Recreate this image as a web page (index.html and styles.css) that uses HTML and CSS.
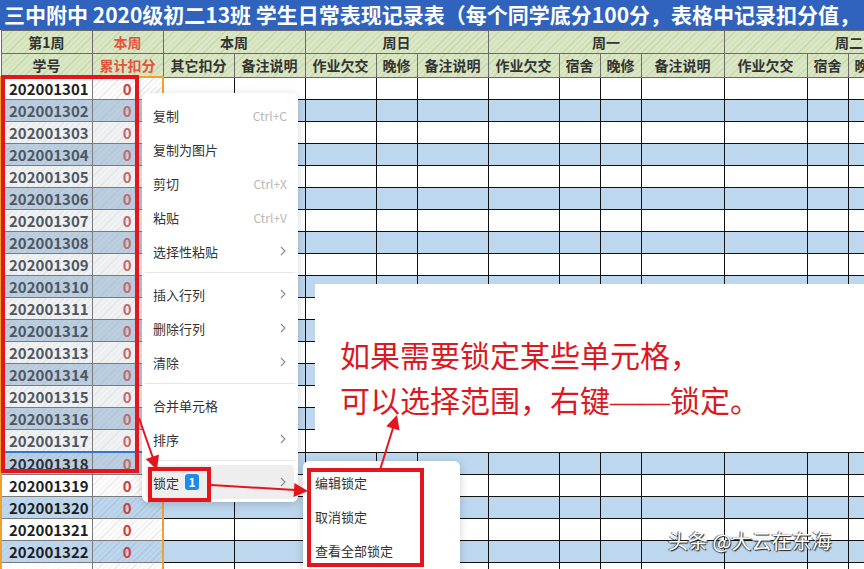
FILE: index.html
```html
<!DOCTYPE html>
<html lang="zh-CN">
<head>
    <meta charset="UTF-8">
    <title>学生日常表现记录表</title>
    <link rel="stylesheet" href="styles.css">
</head>
<body>
    <div class="sheet">
        <div class="title">三中附中 2020级初二13班 学生日常表现记录表（每个同学底分100分，表格中记录扣分值，</div>

        <table class="grid">
            <colgroup>
                <col class="c-id"><col class="c-mid"><col class="c-mid"><col class="c-mid">
                <col class="c-mid"><col class="c-narrow"><col class="c-mid">
                <col class="c-mid"><col class="c-narrow"><col class="c-narrow"><col class="c-wide">
                <col class="c-wide"><col class="c-narrow"><col class="c-narrow"><col class="c-last">
            </colgroup>
            <thead>
                <tr>
                    <th>第1周</th>
                    <th class="red">本周</th>
                    <th colspan="2">本周</th>
                    <th colspan="3">周日</th>
                    <th colspan="4">周一</th>
                    <th colspan="4">周二</th>
                </tr>
                <tr>
                    <th>学号</th>
                    <th class="red">累计扣分</th>
                    <th>其它扣分</th>
                    <th>备注说明</th>
                    <th>作业欠交</th>
                    <th>晚修</th>
                    <th>备注说明</th>
                    <th>作业欠交</th>
                    <th>宿舍</th>
                    <th>晚修</th>
                    <th>备注说明</th>
                    <th>作业欠交</th>
                    <th>宿舍</th>
                    <th>晚修</th>
                    <th>备注说明</th>
                </tr>
            </thead>
            <tbody id="rows"></tbody>
        </table>

        <!-- annotation box over the sheet -->
        <div class="note">
            <p>如果需要锁定某些单元格，</p>
            <p>可以选择范围，右键<span class="dash">——</span>锁定。</p>
        </div>

        <!-- right click menu -->
        <div class="menu">
            <div class="menu-item"><span>复制</span><span class="key">Ctrl+C</span></div>
            <div class="menu-item"><span>复制为图片</span></div>
            <div class="menu-item"><span>剪切</span><span class="key">Ctrl+X</span></div>
            <div class="menu-item"><span>粘贴</span><span class="key">Ctrl+V</span></div>
            <div class="menu-item"><span>选择性粘贴</span><svg class="chev" viewBox="0 0 6 10"><polyline points="1,1 5,5 1,9"/></svg></div>
            <div class="menu-sep"></div>
            <div class="menu-item"><span>插入行列</span><svg class="chev" viewBox="0 0 6 10"><polyline points="1,1 5,5 1,9"/></svg></div>
            <div class="menu-item"><span>删除行列</span><svg class="chev" viewBox="0 0 6 10"><polyline points="1,1 5,5 1,9"/></svg></div>
            <div class="menu-item"><span>清除</span><svg class="chev" viewBox="0 0 6 10"><polyline points="1,1 5,5 1,9"/></svg></div>
            <div class="menu-sep"></div>
            <div class="menu-item"><span>合并单元格</span></div>
            <div class="menu-item"><span>排序</span><svg class="chev" viewBox="0 0 6 10"><polyline points="1,1 5,5 1,9"/></svg></div>
            <div class="menu-sep"></div>
            <div class="menu-item active"><span>锁定 <b class="badge">1</b></span><svg class="chev" viewBox="0 0 6 10"><polyline points="1,1 5,5 1,9"/></svg></div>
        </div>

        <div class="submenu">
            <div class="menu-item">编辑锁定</div>
            <div class="menu-item">取消锁定</div>
            <div class="menu-item">查看全部锁定</div>
        </div>

        <!-- red marks -->
        <div class="mark-box box-range"></div>
        <div class="mark-box box-lock"></div>
        <div class="mark-box box-sub"></div>

        <svg class="arrows" viewBox="0 0 864 569">
            <line x1="139" y1="418" x2="153" y2="458"/>
            <polygon points="157,470 159,454.5 145.8,459.1"/>
            <line x1="211" y1="485" x2="295" y2="490"/>
            <polygon points="308,491 293.6,497.1 294.4,483.1"/>
            <line x1="380" y1="470" x2="393" y2="428"/>
            <polygon points="397,415 399.6,430.5 386.2,426.3"/>
        </svg>

        <div class="watermark">头条 @大云在东海</div>
    </div>

    <script>
        // build the student rows
        var tbody = document.getElementById('rows');
        for (var i = 1; i <= 23; i++) {
            var tr = document.createElement('tr');
            if (i % 2 == 0) tr.className = 'alt';
            var cls = '';
            if (i >= 2 && i <= 18) cls = ' sel';
            if (i == 18) cls += ' cur';
            var html = '<td class="id' + cls + '">' + (202001300 + i) + '</td>';
            html += '<td class="pts' + cls + '">0</td>';
            for (var c = 0; c < 13; c++) {
                html += '<td></td>';
            }
            tr.innerHTML = html;
            tbody.appendChild(tr);
        }
    </script>
</body>
</html>
```

FILE: styles.css
```css
body {
    margin: 0;
    font-family: "Noto Sans CJK SC", "Noto Sans", sans-serif;
    background-color: #ffffff;
}
.sheet {
    position: relative;
    width: 864px;
    height: 569px;
    overflow: hidden;
}
.title {
    height: 30px;
    line-height: 29px;
    background-color: #2f63bd;
    color: #ffffff;
    font-size: 21px;
    font-weight: bold;
    padding-left: 4px;
    white-space: nowrap;
}
.grid {
    border-collapse: collapse;
    table-layout: fixed;
    width: 973px;
}
.c-id { width: 91px; }
.c-mid { width: 71px; }
.c-narrow { width: 41px; }
.c-wide { width: 83px; }
.c-last { width: 85px; }
.grid th {
    height: 22px;
    padding: 0;
    font-size: 14px;
    font-weight: bold;
    color: #333333;
    border: 1px solid #6b6b6b;
    white-space: nowrap;
    overflow: hidden;
    background: repeating-linear-gradient(135deg, #dbe7c7 0, #dbe7c7 3px, #c2d5a4 3px, #c2d5a4 4px);
}
.grid th.red {
    color: #e0553b;
}
.grid tr {
    height: 22px;
}
.grid td {
    padding: 0;
    border: 1px solid #111111;
    background-color: #ffffff;
}
.grid tr.alt td {
    background-color: #bdd7ee;
}
.grid td.id {
    font-size: 15px;
    font-weight: bold;
    color: #1e1e1e;
    padding-left: 7px;
    border-color: #7b7b7b;
    border-left: 2px solid #f0a030;
    background-image: repeating-linear-gradient(135deg, transparent 0, transparent 3px, rgba(0, 0, 0, 0.03) 3px, rgba(0, 0, 0, 0.03) 4px);
}
.grid td.pts {
    font-size: 15px;
    font-weight: bold;
    color: #d23c3c;
    text-align: center;
    border-color: #7b7b7b;
    border-right: 2px solid #f0a030;
    background-image: repeating-linear-gradient(135deg, transparent 0, transparent 3px, rgba(0, 0, 0, 0.1) 3px, rgba(0, 0, 0, 0.1) 4px);
}
.grid tbody tr:first-child td.id,
.grid tbody tr:first-child td.pts {
    border-top: 2px solid #f0a030;
}
.grid td.sel {
    color: #4e5762;
    background-color: #f1f2f4;
    background-image: repeating-linear-gradient(135deg, transparent 0, transparent 3px, rgba(0, 0, 0, 0.06) 3px, rgba(0, 0, 0, 0.06) 4px);
}
.grid td.pts.sel {
    color: #c46a6a;
}
.grid tr.alt td.sel {
    background-color: #bccfe1;
}
.grid td.cur {
    border-top: 2px solid #2f78d0;
    color: #2b2f36;
}

/* annotation */
.note {
    position: absolute;
    left: 315px;
    top: 284px;
    width: 549px;
    height: 168px;
    background-color: #ffffff;
    padding: 48px 0 0 25px;
    box-sizing: border-box;
    color: #dc1820;
    font-size: 30px;
    line-height: 45px;
    white-space: nowrap;
}
.note p {
    margin: 0;
}
.dash {
    font-family: "Liberation Serif", serif;
}

/* context menu */
.menu, .submenu {
    position: absolute;
    background-color: #ffffff;
    border-radius: 6px;
    box-shadow: 0 2px 10px rgba(0, 0, 0, 0.18);
}
.menu {
    left: 142px;
    top: 93px;
    width: 156px;
    padding: 5px 0 3px;
}
.submenu {
    left: 303px;
    top: 461px;
    width: 157px;
    height: 120px;
    padding-top: 4px;
}
.menu-item {
    height: 34px;
    margin: 0 4px;
    padding: 0 7px;
    display: flex;
    align-items: center;
    justify-content: space-between;
    font-size: 13px;
    color: #333333;
    border-radius: 4px;
    white-space: nowrap;
}
.submenu .menu-item {
    margin: 0;
    padding-left: 12px;
}
.menu-item.active {
    background-color: #eeeeee;
}
.key {
    font-size: 12px;
    color: #b8b8b8;
}
.chev {
    width: 6px;
    height: 10px;
    margin-right: 1px;
}
.chev polyline {
    fill: none;
    stroke: #8a8a8a;
    stroke-width: 1.1;
}
.badge {
    display: inline-block;
    width: 14px;
    height: 16px;
    line-height: 16px;
    margin-left: 3px;
    border-radius: 3px;
    background-color: #1a8cf0;
    color: #ffffff;
    font-size: 12px;
    text-align: center;
    vertical-align: 1px;
}
.menu-sep {
    height: 1px;
    margin: 4px 3px;
    background-color: #e6e6e6;
}

/* red marks */
.mark-box {
    position: absolute;
    border: 4px solid #e3161d;
    box-sizing: border-box;
}
.box-range {
    left: 1px;
    top: 75px;
    width: 138px;
    height: 398px;
}
.box-lock {
    left: 148px;
    top: 467px;
    width: 63px;
    height: 35px;
}
.box-sub {
    left: 307px;
    top: 468px;
    width: 117px;
    height: 99px;
}
.arrows {
    position: absolute;
    left: 0;
    top: 0;
    width: 864px;
    height: 569px;
}
.arrows line {
    stroke: #e3161d;
    stroke-width: 2;
}
.arrows polygon {
    fill: #e3161d;
}

.watermark {
    position: absolute;
    left: 668px;
    top: 528px;
    font-size: 20px;
    line-height: 26px;
    color: #ffffff;
    white-space: nowrap;
    text-shadow: 1px 1px 1px #222, -1px 0 1px #444;
}
```
